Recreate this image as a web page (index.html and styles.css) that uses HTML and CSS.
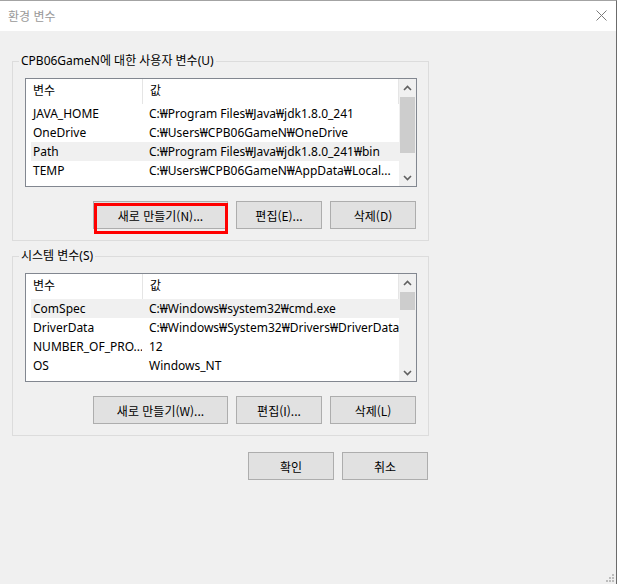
FILE: index.html
```html
<!DOCTYPE html>
<html lang="ko">
<head>
  <meta charset="UTF-8" />
  <title>환경 변수</title>
  <link rel="stylesheet" href="styles.css">
</head>
<body>

  <div class="window">
    <div class="titlebar">
      <span class="title">환경 변수</span>
      <svg class="close" width="11" height="11" viewBox="0 0 11 11">
        <path d="M0.5 0.5 L10.5 10.5 M10.5 0.5 L0.5 10.5" stroke="#7a7a7a" stroke-width="1" fill="none" />
      </svg>
    </div>

    <div class="content">
      <fieldset class="group">
        <legend>CPB06GameN에 대한 사용자 변수(U)</legend>
        <div class="list">
          <div class="list-body">
            <div class="row head"><span class="name">변수</span><span class="value">값</span></div>
            <div class="row"><span class="name">JAVA_HOME</span><span class="value">C:₩Program Files₩Java₩jdk1.8.0_241</span></div>
            <div class="row"><span class="name">OneDrive</span><span class="value">C:₩Users₩CPB06GameN₩OneDrive</span></div>
            <div class="row selected"><span class="name">Path</span><span class="value">C:₩Program Files₩Java₩jdk1.8.0_241₩bin</span></div>
            <div class="row"><span class="name">TEMP</span><span class="value">C:₩Users₩CPB06GameN₩AppData₩Local...</span></div>
          </div>
          <div class="scrollbar">
            <div class="arrow">
              <svg width="9" height="6" viewBox="0 0 9 6"><path d="M1 5 L4.5 1.5 L8 5" stroke="#606060" stroke-width="1.6" fill="none" /></svg>
            </div>
            <div class="track"><div class="thumb user-thumb"></div></div>
            <div class="arrow">
              <svg width="9" height="6" viewBox="0 0 9 6"><path d="M1 1 L4.5 4.5 L8 1" stroke="#606060" stroke-width="1.6" fill="none" /></svg>
            </div>
          </div>
        </div>
        <div class="buttons">
          <button class="btn wide marked">새로 만들기(N)...</button>
          <button class="btn">편집(E)...</button>
          <button class="btn">삭제(D)</button>
        </div>
      </fieldset>

      <fieldset class="group second">
        <legend>시스템 변수(S)</legend>
        <div class="list">
          <div class="list-body">
            <div class="row head"><span class="name">변수</span><span class="value">값</span></div>
            <div class="row selected"><span class="name">ComSpec</span><span class="value">C:₩Windows₩system32₩cmd.exe</span></div>
            <div class="row"><span class="name">DriverData</span><span class="value">C:₩Windows₩System32₩Drivers₩DriverData</span></div>
            <div class="row"><span class="name">NUMBER_OF_PRO...</span><span class="value">12</span></div>
            <div class="row"><span class="name">OS</span><span class="value">Windows_NT</span></div>
          </div>
          <div class="scrollbar">
            <div class="arrow">
              <svg width="9" height="6" viewBox="0 0 9 6"><path d="M1 5 L4.5 1.5 L8 5" stroke="#606060" stroke-width="1.6" fill="none" /></svg>
            </div>
            <div class="track"><div class="thumb system-thumb"></div></div>
            <div class="arrow">
              <svg width="9" height="6" viewBox="0 0 9 6"><path d="M1 1 L4.5 4.5 L8 1" stroke="#606060" stroke-width="1.6" fill="none" /></svg>
            </div>
          </div>
        </div>
        <div class="buttons">
          <button class="btn wide">새로 만들기(W)...</button>
          <button class="btn">편집(I)...</button>
          <button class="btn">삭제(L)</button>
        </div>
      </fieldset>

      <div class="buttons footer">
        <button class="btn">확인</button>
        <button class="btn">취소</button>
      </div>
    </div>

    <div class="grip">
      <i class="dot d1"></i><i class="dot d2"></i><i class="dot d3"></i>
      <i class="dot d4"></i><i class="dot d5"></i><i class="dot d6"></i>
    </div>
  </div>

</body>
</html>
```

FILE: styles.css
```css
body { margin: 0; font-family: "Noto Sans", "Noto Sans CJK KR", sans-serif; font-size: 12px; color: #000; }
.window { position: relative; width: 617px; height: 584px; box-sizing: border-box; background: #f0f0f0; border-top: 1px solid #a3a3a3; border-right: 1px solid #6b6b6b; overflow: hidden; }

.titlebar { height: 30px; background: #fff; display: flex; align-items: center; justify-content: space-between; padding: 0 9px 0 8px; }
.title { color: #999; font-family: "Noto Sans CJK KR", sans-serif; line-height: 16px; }
.close { display: block; margin-top: -2px; }

.content { padding: 22px 0 0 12px; }
.group { width: 417px; box-sizing: border-box; margin: 0; padding: 9px 11px 11px 12px; border: 1px solid #dcdcdc; min-inline-size: 0; }
.group.second { margin-top: 7px; }
.group legend { padding: 0 2px; margin-left: -6px; line-height: 16px; font-family: "Noto Sans", "Noto Sans CJK KR", sans-serif; }

.list { display: flex; height: 109px; box-sizing: border-box; border: 1px solid #828790; background: #fff; }
.list-body { flex: 1; overflow: hidden; padding-left: 5px; }
.row { display: flex; height: 19px; line-height: 19px; white-space: nowrap; }
.row.head { height: 25px; line-height: 24px; }
.row.head .name { border-right: 1px solid #e5e5e5; }
.row.head .value { border-right: 1px solid #e5e5e5; }
.row.selected { background: #f0f0f0; }
.name { width: 109px; flex: none; padding-left: 2px; overflow: hidden; }
.value { flex: 1; padding-left: 7px; overflow: hidden; }

.scrollbar { width: 17px; flex: none; display: flex; flex-direction: column; background: #f0f0f0; }
.arrow { height: 17px; display: flex; align-items: center; justify-content: center; }
.track { flex: 1; }
.thumb { margin: 1px 1px 0; background: #cdcdcd; }
.user-thumb { height: 56px; }
.system-thumb { height: 18px; }

.buttons { display: flex; justify-content: flex-end; gap: 8px; margin-top: 14px; padding-right: 1px; }
.btn { position: relative; width: 86px; height: 28px; box-sizing: border-box; padding: 0; background: #e1e1e1; border: 1px solid #adadad; font-family: "Noto Sans CJK KR", "Noto Sans", sans-serif; font-size: 12px; color: #000; }
.btn.wide { width: 135px; }
.btn.marked::after { content: ""; position: absolute; left: 0; top: 1px; width: 134px; height: 31px; box-sizing: border-box; border: 3px solid #f00; }

.footer { width: 416px; margin-top: 16px; padding-right: 0; }

.grip { position: absolute; right: 2px; bottom: 2px; width: 8px; height: 8px; }
.dot { position: absolute; width: 2px; height: 2px; background: #bcbcbc; }
.d1 { right: 0; top: 0; }
.d2 { right: 3px; top: 3px; }
.d3 { right: 0; top: 3px; }
.d4 { right: 6px; top: 6px; }
.d5 { right: 3px; top: 6px; }
.d6 { right: 0; top: 6px; }
```
